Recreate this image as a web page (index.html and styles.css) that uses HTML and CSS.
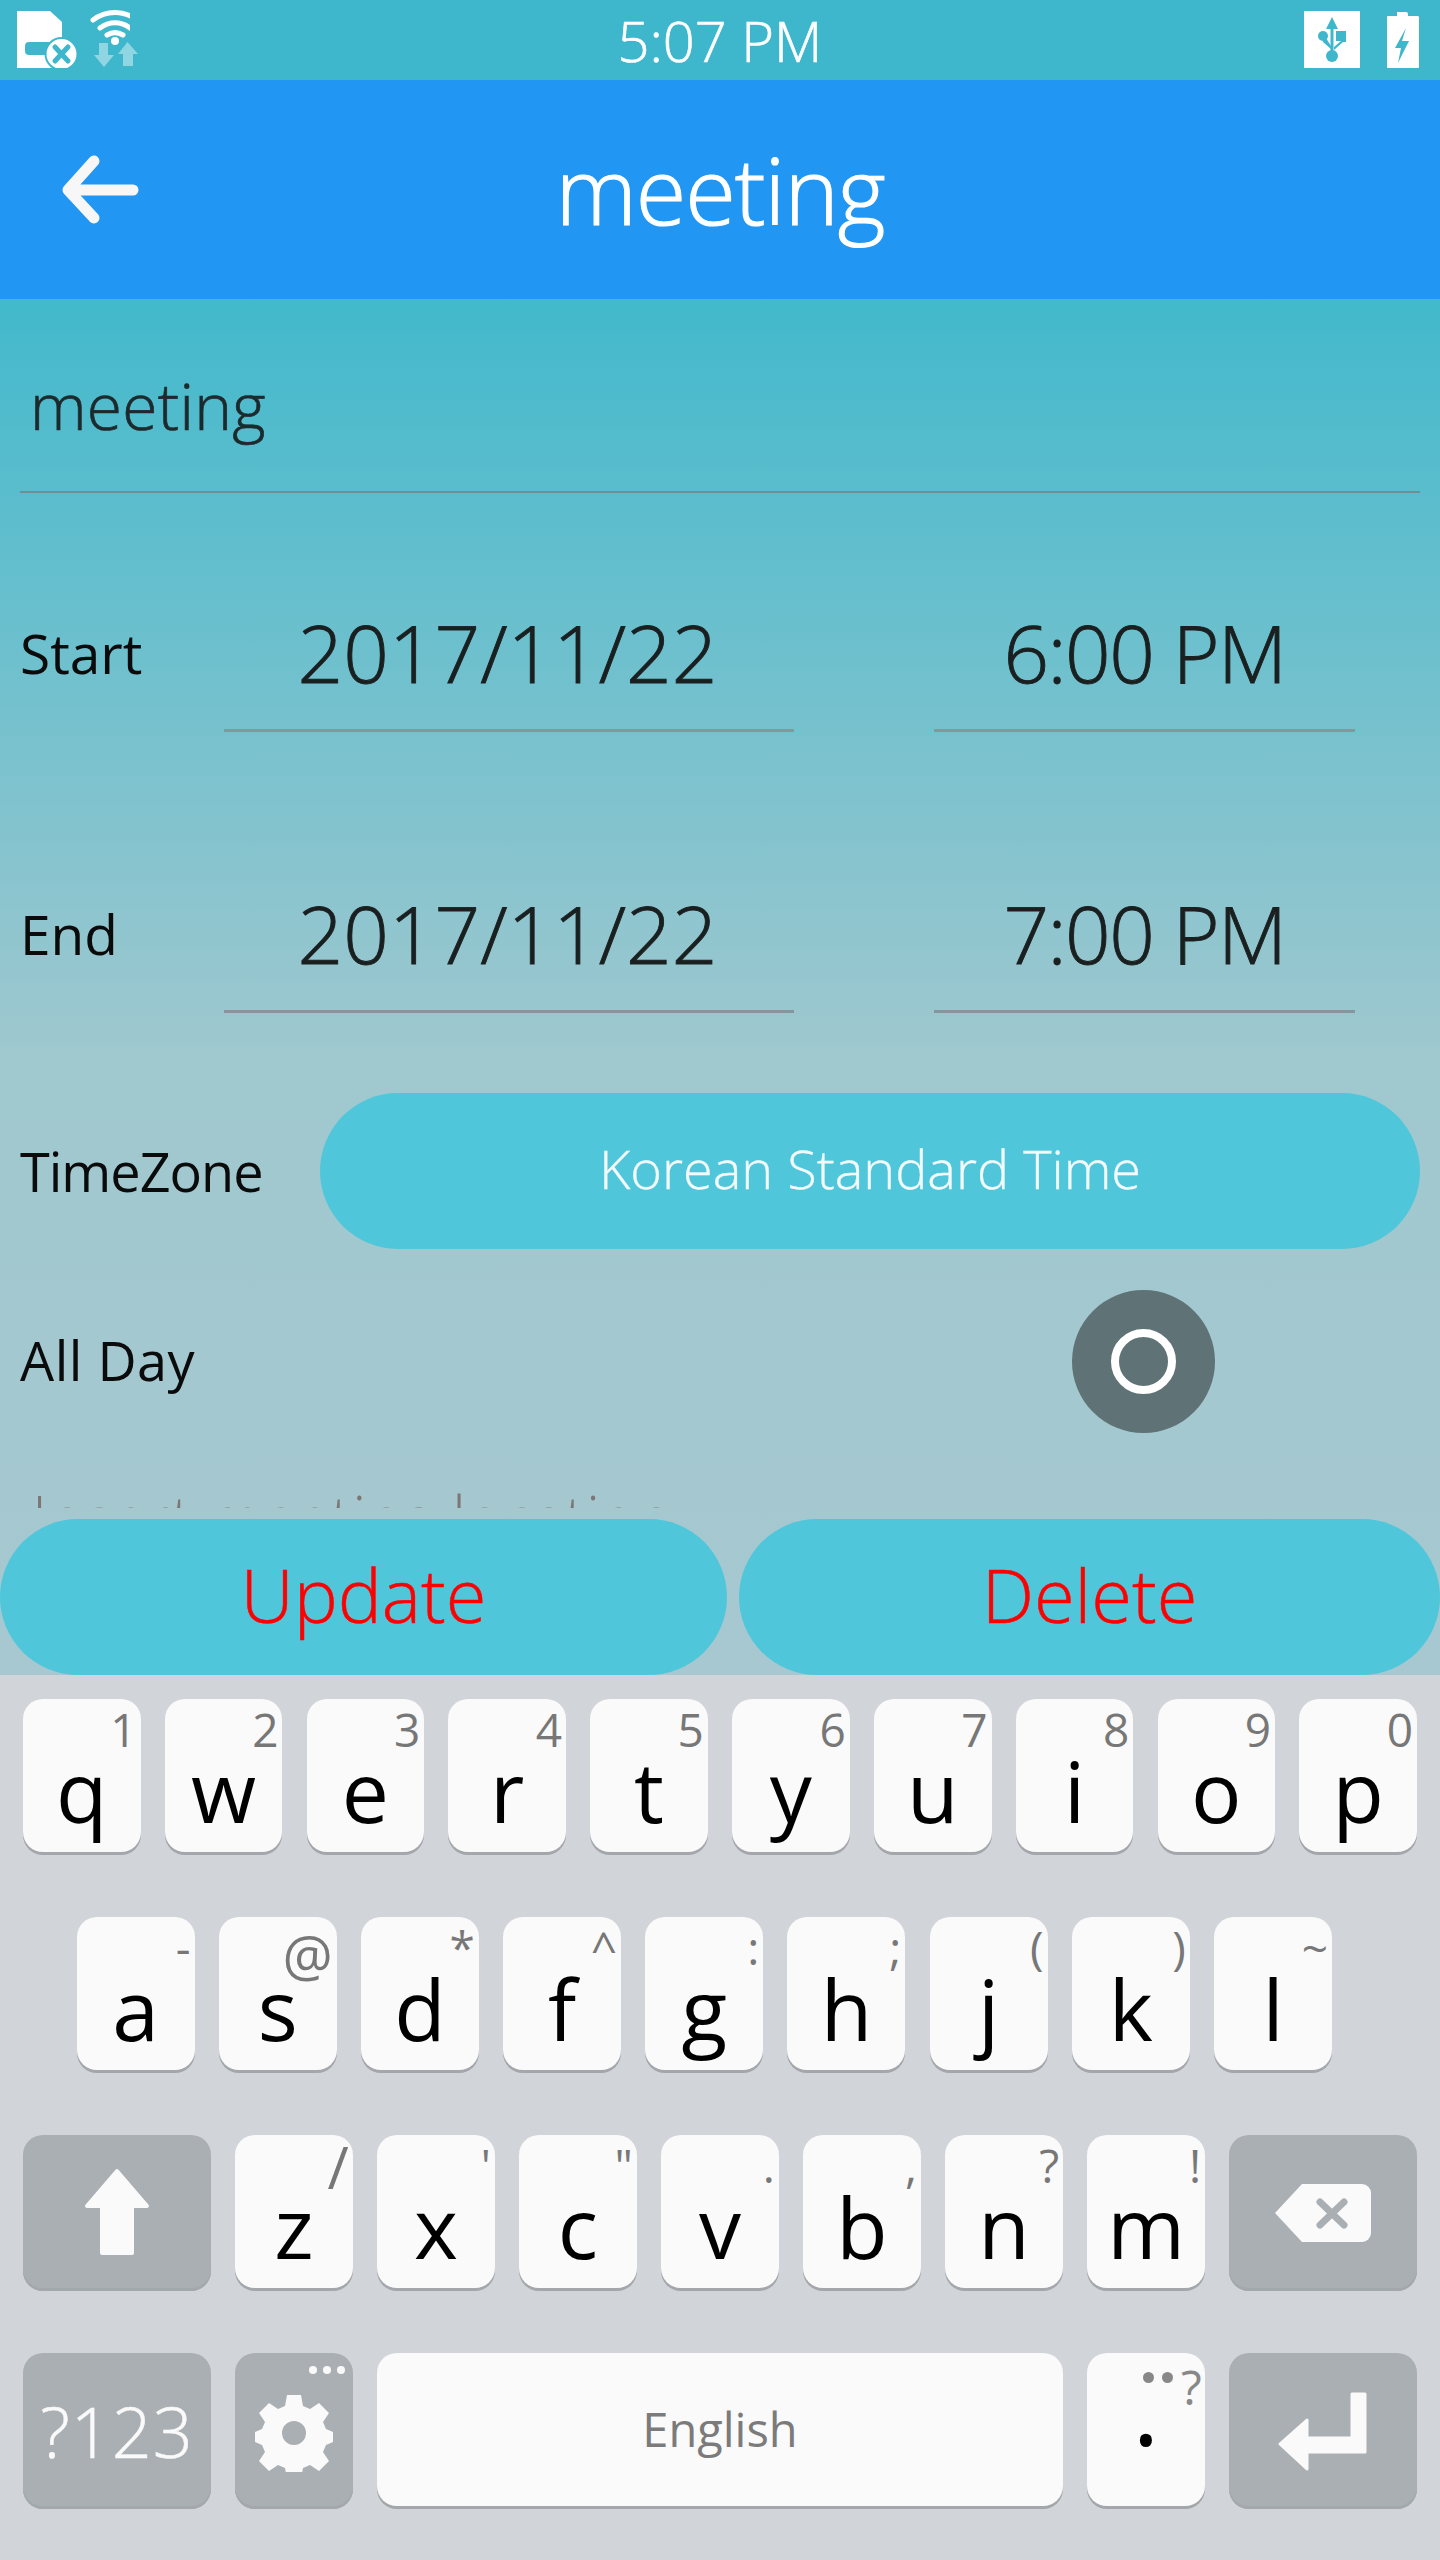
FILE: index.html
```html
<!DOCTYPE html>
<html lang="en">
  <head>
    <meta charset="UTF-8" />
    <meta name="viewport" content="width=device-width, initial-scale=1.0" />
    <title>meeting</title>
    <link rel="stylesheet" href="styles.css">
  </head>
  <body>
    <div class="screen">
      <!-- Status bar -->
      <div class="status">
        <svg class="status-left" width="130" height="60" viewBox="0 0 130 60">
          <path fill="#fff" d="M17 3h33l12 11v46H17z" />
          <rect x="25" y="34" width="34" height="13" rx="4" fill="#3eb7cd" />
          <circle cx="61.500" cy="46" r="17" fill="#3eb7cd" />
          <circle cx="61.500" cy="46" r="15" fill="#fff" />
          <path d="M55 39l13 14M68 39L55 53" stroke="#3eb7cd" stroke-width="5" stroke-linecap="round" />
          <g fill="none" stroke="#fff" stroke-linecap="round">
            <path stroke-width="5" d="M93 12c13-10 31-10 44 0" />
            <path stroke-width="5" d="M100 20c9-7 21-7 30 0" />
            <path stroke-width="5" d="M107 27c5-3 11-3 16 0" />
          </g>
          <circle cx="115" cy="33" r="4" fill="#fff" />
        </svg>
        <svg class="status-arrows" width="60" height="32" viewBox="0 0 60 32">
          <path fill="#fff" fill-opacity=".42" d="M9 3h9v12h6L14 27 4 15h5zM37.500 2L48 14h-5v12H33V14h-5z" />
        </svg>
        <span class="clock">5:07 PM</span>
        <svg class="status-right" width="116" height="60" viewBox="0 0 116 60">
          <rect x="0" y="3" width="56" height="57" fill="#fff" />
          <path fill="#3eb7cd" d="M28 9l6 12h-4.500v23h-3V21H22z" />
          <circle cx="28" cy="48" r="6" fill="#3eb7cd" />
          <ellipse cx="19" cy="28" rx="5" ry="5" fill="#3eb7cd" />
          <path fill="#3eb7cd" d="M32 23h10v11h-3l-9 8v-3l7-6h-5z" />
          <path fill="#3eb7cd" d="M19 30h3l5 8v3l-8-7z" />
          <path fill="#fff" d="M93 4h9a2 2 0 0 1 2 2v2h10a2 2 0 0 1 1 1v50a1 1 0 0 1-1 1H84a1 1 0 0 1-1-1V9a1 1 0 0 1 1-1h9z" />
          <path fill="#3eb7cd" d="M102 20l-11 20h6l-3 15 11-22h-7z" />
        </svg>
      </div>

      <!-- App bar -->
      <div class="appbar">
        <svg class="back-icon" width="90" height="80" viewBox="0 0 90 80">
          <path d="M36 9L10 38l26 28M10 38h65" fill="none" stroke="#f7f7f7" stroke-width="11" stroke-linecap="round" stroke-linejoin="round" />
        </svg>
        <span class="appbar-title">meeting</span>
      </div>

      <!-- Form -->
      <div class="form">
        <div class="title-field">meeting</div>

        <div class="date-row">
          <span class="row-label">Start</span>
          <span class="picker picker-date">2017/11/22</span>
          <span class="picker picker-time">6:00 PM</span>
        </div>

        <div class="date-row date-row-end">
          <span class="row-label">End</span>
          <span class="picker picker-date">2017/11/22</span>
          <span class="picker picker-time">7:00 PM</span>
        </div>

        <div class="zone-row">
          <span class="row-label">TimeZone</span>
          <span class="zone-pill">Korean Standard Time</span>
        </div>

        <div class="allday-row">
          <span class="row-label">All Day</span>
          <span class="toggle"><span class="toggle-ring"></span></span>
        </div>

        <div class="location-hint">Insert meeting location</div>
      </div>

      <div class="actions">
        <button class="action action-update">Update</button>
        <button class="action action-delete">Delete</button>
      </div>
    </div>

    <!-- Keyboard -->
    <div class="keyboard">
      <div class="key-row">
        <div class="key"><sup>1</sup>q</div>
        <div class="key"><sup>2</sup>w</div>
        <div class="key"><sup>3</sup>e</div>
        <div class="key"><sup>4</sup>r</div>
        <div class="key"><sup>5</sup>t</div>
        <div class="key"><sup>6</sup>y</div>
        <div class="key"><sup>7</sup>u</div>
        <div class="key"><sup>8</sup>i</div>
        <div class="key"><sup>9</sup>o</div>
        <div class="key"><sup>0</sup>p</div>
      </div>
      <div class="key-row key-row-inset">
        <div class="key"><sup>-</sup>a</div>
        <div class="key"><sup class="sup-at">@</sup>s</div>
        <div class="key"><sup>*</sup>d</div>
        <div class="key"><sup>^</sup>f</div>
        <div class="key"><sup>:</sup>g</div>
        <div class="key"><sup>;</sup>h</div>
        <div class="key"><sup>(</sup>j</div>
        <div class="key"><sup>)</sup>k</div>
        <div class="key"><sup>~</sup>l</div>
      </div>
      <div class="key-row">
        <div class="key key-fn">
          <svg width="66" height="90" viewBox="0 0 66 90">
            <path fill="#fafafa" stroke="#fafafa" stroke-width="4" stroke-linejoin="round" d="M33 3L63 38H48V85H18V38H3z" />
          </svg>
        </div>
        <div class="key"><sup class="sup-slash">/</sup>z</div>
        <div class="key"><sup>'</sup>x</div>
        <div class="key"><sup>"</sup>c</div>
        <div class="key"><sup>.</sup>v</div>
        <div class="key"><sup>,</sup>b</div>
        <div class="key"><sup>?</sup>n</div>
        <div class="key"><sup>!</sup>m</div>
        <div class="key key-fn">
          <svg width="96" height="58" viewBox="0 0 96 58">
            <path fill="#fafafa" d="M27 0h60a9 9 0 0 1 9 9v40a9 9 0 0 1-9 9H27L0 29z" />
            <path d="M45 18l24 23M69 18L45 41" stroke="#aaafb3" stroke-width="7" stroke-linecap="round" />
          </svg>
        </div>
      </div>
      <div class="key-row">
        <div class="key key-fn key-symbols">?123</div>
        <div class="key key-fn key-gear">
          <span class="gear-dots"><i></i><i></i><i></i></span>
          <svg width="78" height="78" viewBox="0 0 78 78">
            <path fill="#fafafa" fill-rule="evenodd" d="M32 1h14l2 11 7 3 9-6 10 10-6 9 3 7 7 3v10l-7 3-3 7 6 9-10 10-9-6-7 3-2 11H32l-2-11-7-3-9 6L4 67l6-9-3-7-7-3V38l7-3 3-7-6-9L14 9l9 6 7-3zM39 27a12 12 0 1 0 0 24 12 12 0 0 0 0-24z" />
          </svg>
        </div>
        <div class="key key-space">English</div>
        <div class="key key-period"><sup><i></i><i></i>?</sup>.</div>
        <div class="key key-fn">
          <svg width="90" height="80" viewBox="0 0 90 80">
            <path fill="#fafafa" stroke="#fafafa" stroke-width="3" stroke-linejoin="round" d="M74 3h13v58H29v17L2 53l27-24v18h45z" />
          </svg>
        </div>
      </div>
    </div>
  </body>
</html>
```

FILE: styles.css
```css
body {
  margin: 0;
  width: 1440px;
  height: 2560px;
  overflow: hidden;
  font-family: "Open Sans", sans-serif;
  background-color: #d1d5da;
}

/* Everything above the keyboard */
.screen {
  height: 1675px;
  display: flex;
  flex-direction: column;
  background: linear-gradient(#42b9cc 299px, #a0c8cf 1060px, #a7c8d0 1675px);
}

/* Status bar */
.status {
  position: relative;
  height: 80px;
  flex: none;
  background-color: #3eb7cd;
  display: flex;
  align-items: center;
  justify-content: center;
}

.status-left {
  position: absolute;
  left: 0;
  top: 8px;
}

.status-arrows {
  position: absolute;
  left: 90px;
  top: 40px;
}

.status-right {
  position: absolute;
  left: 1304px;
  top: 8px;
}

.clock {
  color: #fff;
  font-size: 56px;
  font-weight: 300;
  -webkit-text-stroke: 0.6px #fff;
}

/* App bar */
.appbar {
  position: relative;
  height: 219px;
  flex: none;
  background-color: #2196f3;
  display: flex;
  align-items: center;
  justify-content: center;
}

.back-icon {
  position: absolute;
  left: 58px;
  top: 72px;
}

.appbar-title {
  color: #fff;
  font-size: 92px;
  font-weight: 300;
  letter-spacing: -1px;
  -webkit-text-stroke: 1.2px #fff;
}

/* Form */
.form {
  height: 1209px;
  flex: none;
  overflow: hidden;
  padding: 0 20px;
}

.title-field {
  height: 194px;
  border-bottom: 2px solid #6f8f96;
  box-sizing: border-box;
  padding: 63px 10px 0;
  font-size: 64px;
  font-weight: 300;
  letter-spacing: 0.3px;
  color: #1d2a2d;
  -webkit-text-stroke: 0.7px #1d2a2d;
}

.date-row {
  display: flex;
  align-items: center;
  margin-top: 83px;
}

.date-row-end {
  margin-top: 125px;
}

.row-label {
  color: #0b0b0b;
  font-size: 54px;
  padding-bottom: 4px;
}

.date-row .row-label {
  width: 204px;
  font-size: 55px;
}

.picker {
  height: 156px;
  box-sizing: border-box;
  border-bottom: 3px solid #87969c;
  padding-bottom: 2px;
  display: flex;
  align-items: center;
  justify-content: center;
  color: #1a1f20;
  font-size: 80px;
  font-weight: 300;
  -webkit-text-stroke: 0.9px #1a1f20;
}

.picker-date {
  width: 570px;
  padding-right: 3px;
}

.picker-time {
  width: 421px;
  margin-left: 140px;
  letter-spacing: -1.5px;
}

.zone-row {
  display: flex;
  align-items: center;
  margin-top: 80px;
}

.zone-row .row-label {
  width: 300px;
  padding-bottom: 0;
  letter-spacing: -1px;
}

.zone-pill {
  width: 1100px;
  height: 156px;
  box-sizing: border-box;
  padding-bottom: 6px;
  border-radius: 78px;
  background-color: #50c6db;
  display: flex;
  align-items: center;
  justify-content: center;
  color: #f4fbfc;
  font-size: 54px;
  font-weight: 300;
  -webkit-text-stroke: 0.3px #f4fbfc;
}

.allday-row {
  display: flex;
  align-items: center;
  justify-content: space-between;
  margin-top: 41px;
  padding-right: 205px;
}

.allday-row .row-label {
  letter-spacing: 0.5px;
}

.toggle {
  width: 143px;
  height: 143px;
  border-radius: 50%;
  background-color: #5f7275;
  display: flex;
  align-items: center;
  justify-content: center;
}

.toggle-ring {
  width: 65px;
  height: 65px;
  box-sizing: border-box;
  border: 8px solid #fff;
  border-radius: 50%;
}

/* Only the tops of this line show above the buttons */
.location-hint {
  margin-top: 43px;
  padding-left: 12px;
  color: #7d7674;
  font-size: 60px;
  font-weight: 300;
  letter-spacing: 1px;
  white-space: nowrap;
}

.actions {
  display: flex;
  gap: 12px;
  padding-top: 11px;
}

.action {
  flex: 1;
  height: 156px;
  padding: 0 0 6px;
  border: none;
  border-radius: 78px;
  background-color: #50c6db;
  color: #f00;
  font-family: inherit;
  font-size: 74px;
  font-weight: 300;
  -webkit-text-stroke: 0.5px #f00;
}

.action-update {
  flex: none;
  width: 727px;
}

/* Keyboard */
.keyboard {
  padding: 24px 23px 0;
  display: flex;
  flex-direction: column;
  gap: 62px;
}

.key-row {
  display: flex;
  gap: 24.2px;
  height: 156px;
}

.key-row-inset {
  padding-left: 53.5px;
}

.key {
  position: relative;
  width: 118px;
  height: 153px;
  box-sizing: border-box;
  border-radius: 20px;
  background-color: #fafafa;
  box-shadow: 0 3px 0 #a3a6aa;
  display: flex;
  justify-content: center;
  align-items: center;
  padding-top: 30px;
  color: #000;
  font-size: 84px;
  line-height: 1;
}

.key sup {
  position: absolute;
  top: 5px;
  right: 4px;
  color: #777;
  font-size: 46px;
  line-height: 50px;
}

.key sup.sup-at {
  top: 13px;
  font-size: 56px;
}

.key sup.sup-slash {
  top: 7px;
  font-size: 58px;
}

.key-fn {
  width: 188px;
  height: 156px;
  padding-top: 0;
  background-color: #aaafb3;
  box-shadow: inset 0 -3px 0 #a3a8ac;
}

.key-symbols {
  color: #fafafa;
  font-size: 70px;
  font-weight: 300;
  letter-spacing: 1px;
  -webkit-text-stroke: 0.5px #fafafa;
}

.key-gear {
  width: 118px;
  padding-top: 4px;
}

.gear-dots {
  position: absolute;
  top: 13px;
  right: 8px;
  display: flex;
  gap: 6px;
}

.gear-dots i {
  width: 8px;
  height: 8px;
  border-radius: 50%;
  background-color: #fafafa;
}

.key-space {
  flex: 1;
  padding-top: 0;
  color: #7b7b7b;
  font-size: 47px;
}

.key-period {
  padding: 0 0 48px;
  font-size: 104px;
}

.key-period sup {
  top: 9px;
  right: 3px;
  display: flex;
  gap: 8px;
  color: #888;
  font-size: 48px;
}

.key-period sup i {
  width: 11px;
  height: 11px;
  margin-top: 10px;
  border-radius: 50%;
  background-color: #888;
}
```
